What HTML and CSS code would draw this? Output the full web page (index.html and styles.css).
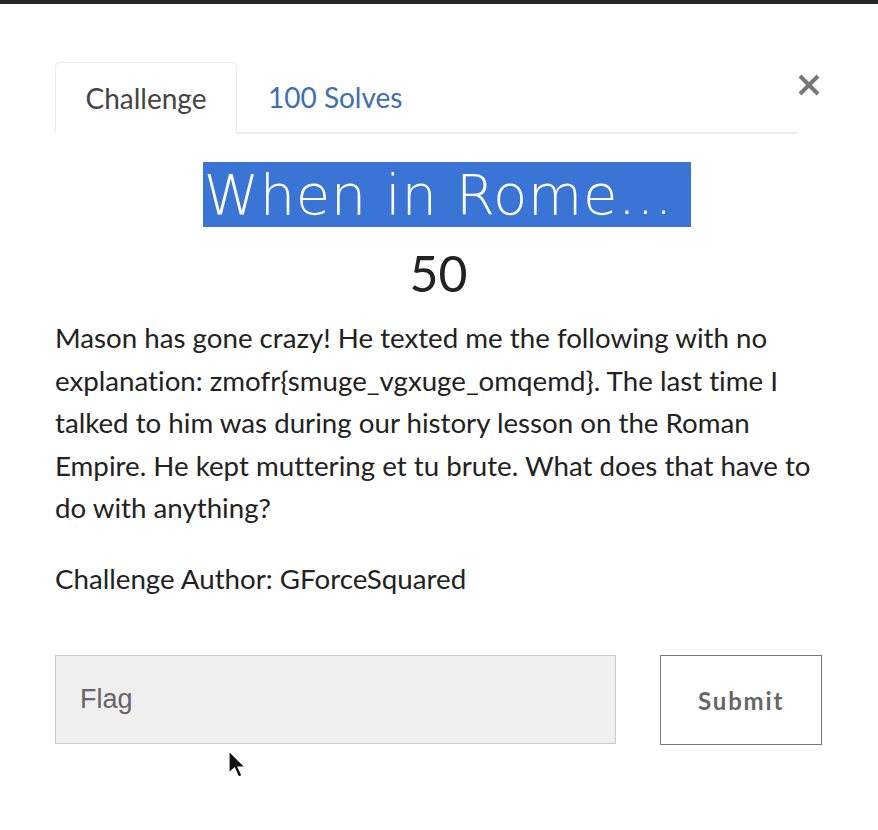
FILE: index.html
```html
<!DOCTYPE html>
<html>
<head>
<meta charset="utf-8">
<link rel="stylesheet" href="styles.css">
</head>
<body>
<div class="topbar"></div>
<div class="modal">
  <div class="tabrow">
    <div class="tabs">
      <div class="tab active">Challenge</div>
      <div class="tab link">100 Solves</div>
    </div>
    <svg class="close" width="22" height="22" viewBox="0 0 22 22"><path d="M2 2 L20 20 M20 2 L2 20" stroke="#777" stroke-width="4" stroke-linecap="butt"/></svg>
  </div>
  <div class="titlewrap"><h1 class="title">When in Rome...</h1></div>
  <div class="points">50</div>
  <p class="desc">Mason has gone crazy! He texted me the following with no explanation: zmofr{smuge_vgxuge_omqemd}. The last time I talked to him was during our history lesson on the Roman Empire. He kept muttering et tu brute. What does that have to do with anything?</p>
  <p class="author">Challenge Author: GForceSquared</p>
  <div class="form">
    <div class="flag">Flag</div>
    <div class="submit">Submit</div>
  </div>
</div>
<svg class="cursor" width="22" height="30" viewBox="0 0 22 30"><path d="M1 1 L1 23 L6.5 18 L10.5 27 L14 25.5 L10 17 L17 17 Z" fill="#111" stroke="#fff" stroke-width="1.2"/></svg>
</body>
</html>
```
FILE: styles.css
```css
html, body { margin: 0; padding: 0; background: #fff; }
body { font-family: Lato, "Open Sans", sans-serif; color: #222; width: 878px; height: 830px; overflow: hidden; position: relative; font-variant-ligatures: none; }
.topbar { height: 4px; background: #262626; }
.modal { padding: 58px 56px 0 55px; }
.tabrow { display: flex; align-items: flex-start; }
.tabs { display: flex; width: 743px; border-bottom: 2px solid #ececec; height: 70px; }
.tab { font-size: 28px; height: 70px; box-sizing: border-box; display: flex; align-items: center; }
.tab.active { border: 1px solid #eaeaea; border-bottom: 2px solid #fff; border-radius: 5px 5px 0 0; color: #444; height: 72px; width: 182px; justify-content: center; padding: 0; }
.tab.link { color: #3f6eb3; padding-left: 31px; }
.close { margin-left: 0; margin-top: 12px; }
.titlewrap { text-align: center; margin-top: 28px; }
.title { display: inline-block; margin: 0 0 0 17px; background: #3a74d4; color: #fff; font-family: "DejaVu Sans", sans-serif; font-weight: 200; font-size: 56px; letter-spacing: 0.6px; line-height: 65px; padding: 0 18px 0 1px; }
.points { text-align: center; font-size: 50px; line-height: 52px; margin-top: 20px; color: #222; }
.desc { font-size: 27.7px; line-height: 42.5px; margin: 18px 0 0 0; color: #222; }
.author { font-size: 27.7px; line-height: 42.5px; margin: 28px 0 0 0; color: #222; }
.form { display: flex; margin-top: 55px; gap: 44px; }
.flag { width: 562px; height: 89px; box-sizing: border-box; background: #efefef; border: 1px solid #ccc; font-family: "Liberation Sans", Arial, sans-serif; font-size: 27px; color: #666; padding-left: 24px; display: flex; align-items: center; }
.submit { width: 162px; height: 90px; box-sizing: border-box; border: 1px solid #777; display: flex; align-items: center; justify-content: center; font-weight: bold; font-size: 24px; letter-spacing: 1.8px; color: #666; }
.cursor { position: absolute; left: 228px; top: 750px; }
```
